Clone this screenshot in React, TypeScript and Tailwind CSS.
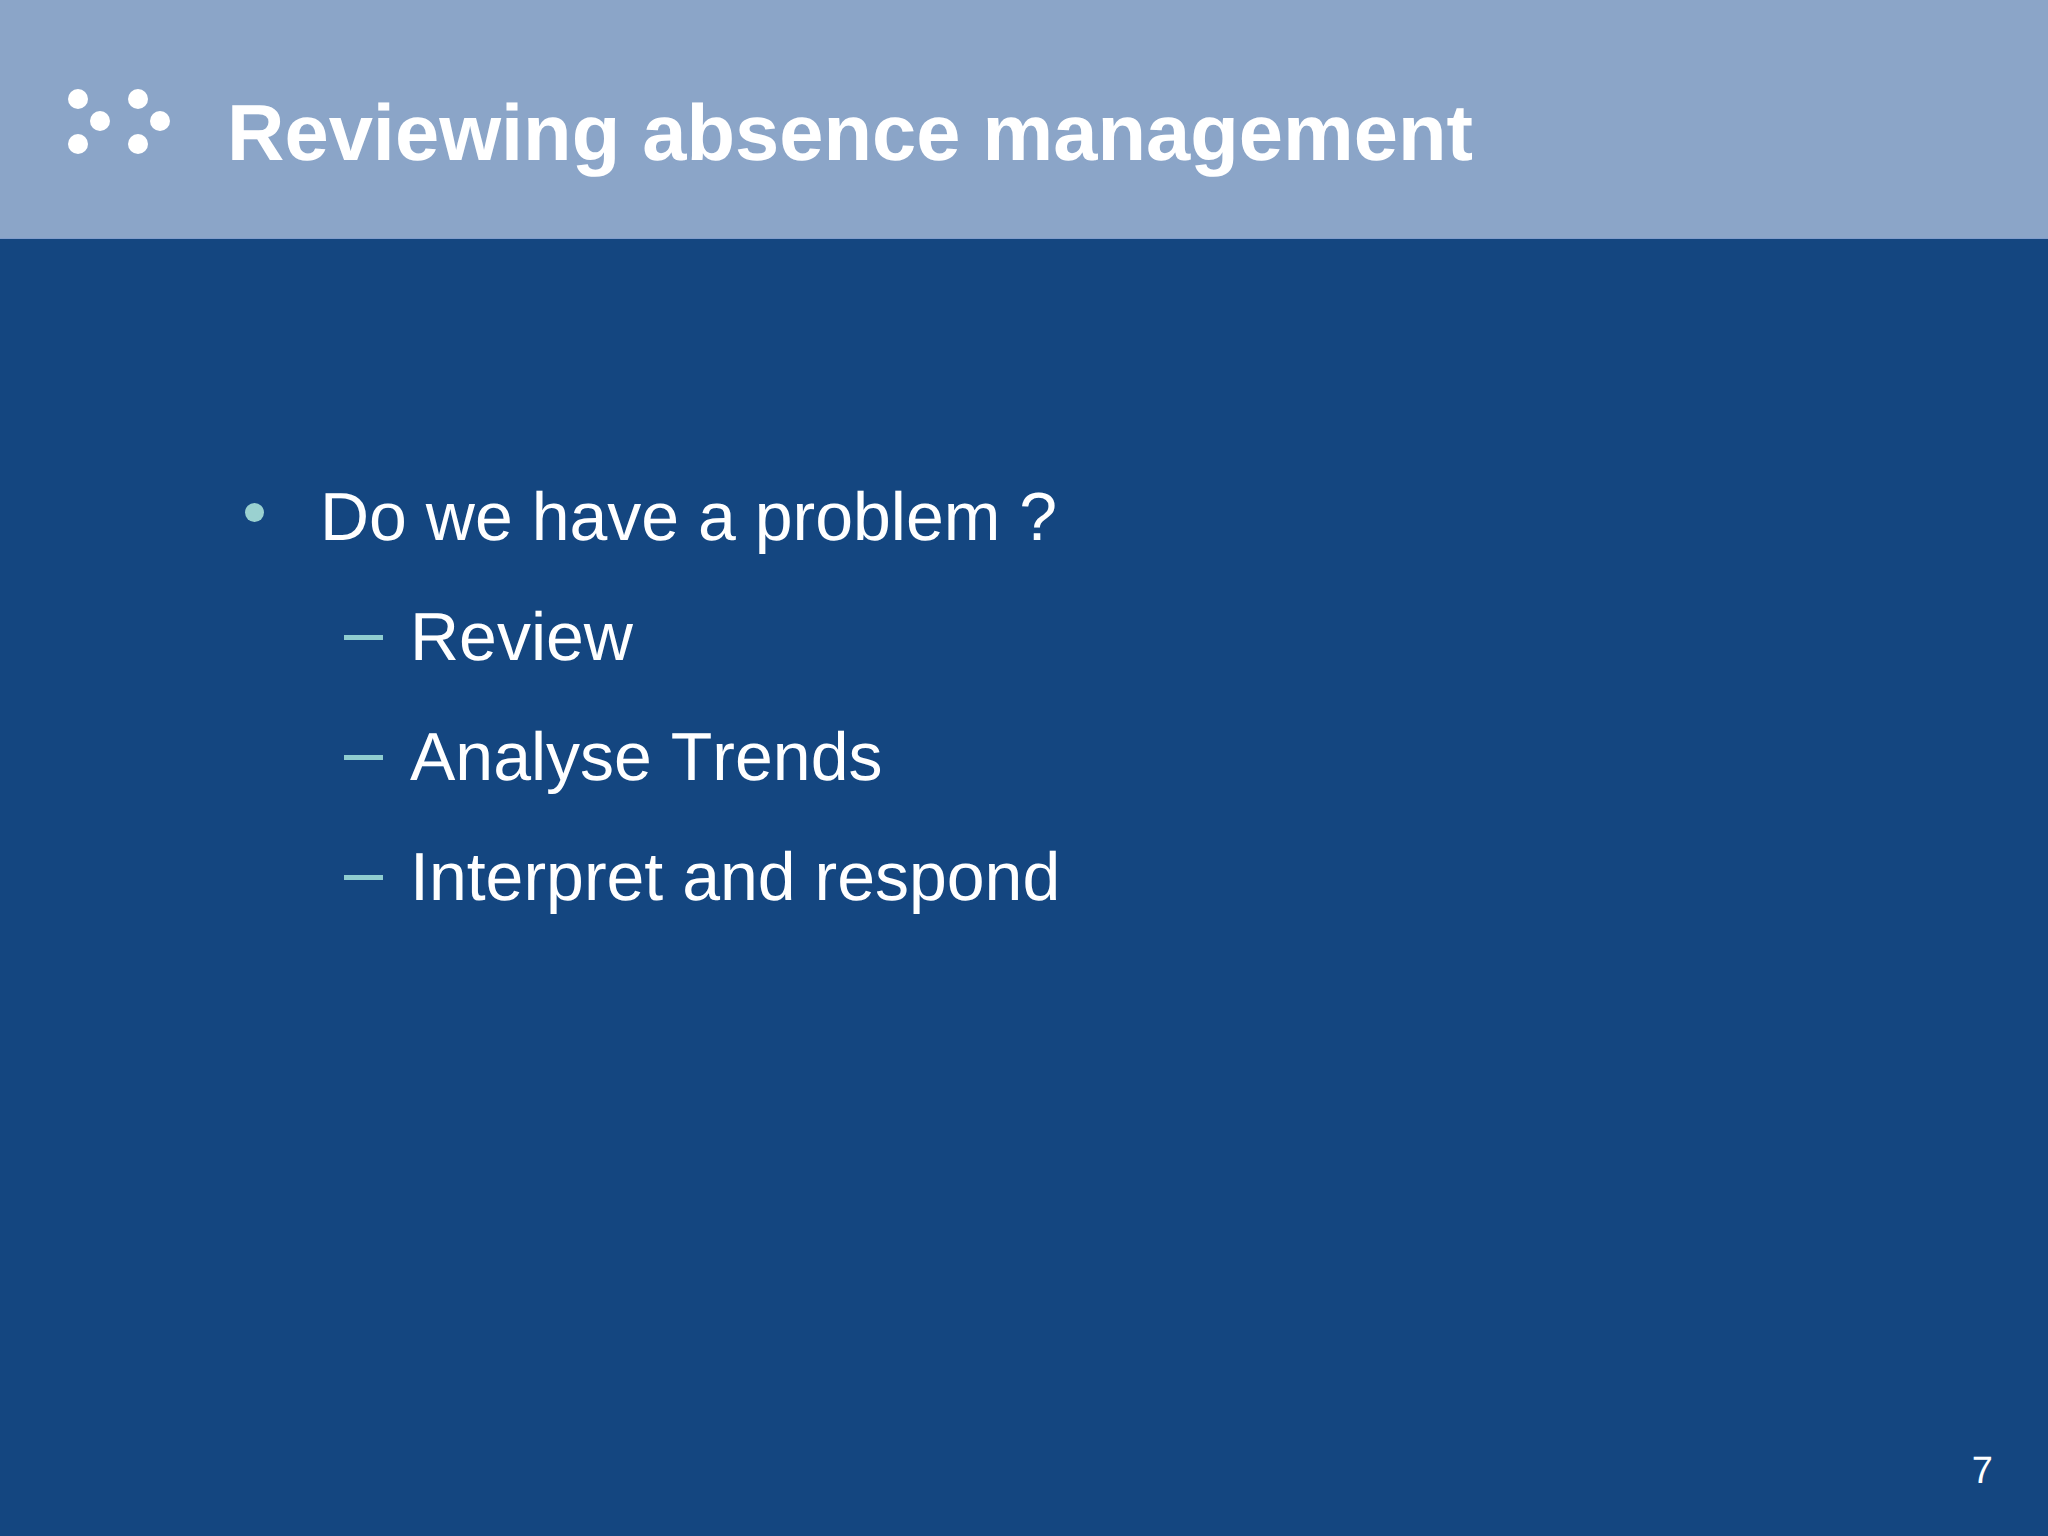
export default function App() {
  const subs = ["Review", "Analyse Trends", "Interpret and respond"];
  return (
    <div className="w-[2048px] h-[1536px] flex flex-col bg-[#144680] font-['Liberation_Sans',Arial,sans-serif] text-white overflow-hidden [text-rendering:geometricPrecision]">
      <header className="h-[239px] shrink-0 bg-[#8ba5c8] flex items-start pl-[68px] border-b border-[#7f9ccb]">
        <svg width="104" height="76" viewBox="0 0 104 76" className="mt-[89px] shrink-0" fill="#fff">
          <circle cx="10" cy="10" r="10" />
          <circle cx="70" cy="10" r="10" />
          <circle cx="32" cy="32" r="10" />
          <circle cx="92" cy="32" r="10" />
          <circle cx="10" cy="55" r="10" />
          <circle cx="70" cy="55" r="10" />
        </svg>
        <h1 className="ml-[55px] mt-[85px] text-[79.5px] leading-[96px] font-bold whitespace-nowrap">Reviewing absence management</h1>
      </header>
      <main className="flex-1 flex flex-col pl-[245px] pt-[218px] relative">
        <div className="flex items-center h-[120px]">
          <span className="w-[19px] h-[19px] rounded-full bg-[#9ad1d0] mb-[10px] shrink-0" />
          <span className="ml-[56px] text-[68px] leading-[120px] whitespace-nowrap [font-kerning:none]">Do we have a problem ?</span>
        </div>
        {subs.map((s) => (
          <div key={s} className="flex items-center h-[120px] pl-[99px]">
            <span className="w-[39px] h-[5px] bg-[#8fcdd0] shrink-0" />
            <span className="ml-[27px] text-[68px] leading-[120px] whitespace-nowrap [font-kerning:none]">{s}</span>
          </div>
        ))}
        <div className="absolute right-[55px] bottom-[43px] text-[38px] leading-[44px]">7</div>
      </main>
    </div>
  );
}
